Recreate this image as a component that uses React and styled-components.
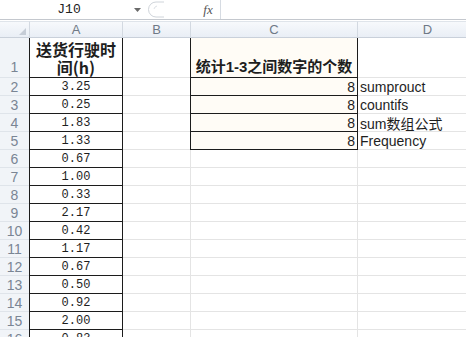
import React from 'react'
import styled, {createGlobalStyle} from 'styled-components'

const GlobalStyle = createGlobalStyle`
    html, body {
        margin: 0;
        padding: 0;
        background: #ffffff;
    }
    body {
        font-family: "Liberation Sans", "Noto Sans CJK SC", sans-serif;
    }
`

const Window = styled.div`
    width: 466px;
    height: 337px;
    overflow: hidden;
    background: #ffffff;
`

const FormulaBar = styled.div`
    display: flex;
    align-items: center;
    height: 19px;
    border-bottom: 1px solid #c4c8ce;
    margin-bottom: 1px;
    background: #ffffff;
`

const NameBox = styled.div`
    width: 122px;
    text-align: center;
    font-family: "Liberation Mono", "DejaVu Sans Mono", monospace;
    font-size: 13px;
    color: #222222;
    padding-left: 8px;
`

const DropArrow = styled.div`
    width: 14px;
    display: flex;
    justify-content: center;
    svg { display: block; }
`

const PillWrap = styled.div`
    width: 52px;
    height: 19px;
    display: flex;
    align-items: center;
    svg { display: block; }
`

const FxLabel = styled.div`
    width: 24px;
    font-family: "Liberation Serif", serif;
    font-style: italic;
    font-size: 13px;
    color: #555555;
    text-align: center;
    border-right: 1px solid #d6dbe2;
    height: 19px;
    line-height: 19px;
`

const FormulaInput = styled.div`
    flex: 1;
    height: 19px;
`

const Sheet = styled.div`
    display: grid;
    grid-template-columns: 30px 93px 68px 167px 140px;
    grid-template-rows: 17px 40px repeat(16, 18px);
`

const ColHead = styled.div`
    display: flex;
    align-items: center;
    justify-content: center;
    background: linear-gradient(#f7f9fc, #e9eef5);
    border-top: 1px solid #dfe4ea;
    border-right: 1px solid #d3d9e1;
    border-bottom: 1px solid #c9d0da;
    font-size: 13px;
    color: #6f7986;
    box-sizing: border-box;
`

const Corner = styled(ColHead)`
    justify-content: flex-end;
    align-items: flex-end;
    padding: 0 3px 2px 0;
    svg { display: block; }
`

const RowHead = styled.div`
    display: flex;
    align-items: center;
    justify-content: center;
    background: #f1f4f8;
    border-right: 1px solid #d3d9e1;
    border-bottom: 1px solid #dfe4ea;
    font-size: 14px;
    color: #7a8594;
    box-sizing: border-box;
    padding-top: ${props => props.$tall ? '18px' : '0'};
`

const Cell = styled.div`
    display: flex;
    align-items: ${props => props.$valign === 'bottom' ? 'flex-end' : props.$valign === 'top' ? 'flex-start' : 'center'};
    justify-content: ${props => props.$align === 'right' ? 'flex-end' : props.$align === 'left' ? 'flex-start' : 'center'};
    box-sizing: border-box;
    border-right: 1px solid ${props => props.$boxed ? '#1c1c1c' : '#e4e4e4'};
    border-bottom: 1px solid ${props => props.$boxed ? '#1c1c1c' : '#e4e4e4'};
    box-shadow: ${props => props.$boxed ? '-1px 0 0 #1c1c1c' : 'none'};
    background: ${props => props.$fill ? '#fffcf6' : '#ffffff'};
    padding: ${props => props.$align === 'right' ? '0 2px 0 0' : props.$align === 'left' ? '0 0 0 2px' : '0'};
    white-space: nowrap;
    overflow: hidden;
    color: #1e1e1e;
`

const NumText = styled.span`
    font-family: "Liberation Mono", "DejaVu Sans Mono", monospace;
    font-size: 12px;
`

const TitleText = styled.div`
    font-family: "Noto Sans CJK SC", sans-serif;
    font-weight: 700;
    font-size: 16px;
    line-height: 18px;
    text-align: center;
    margin-top: 2px;
`

const CountTitle = styled.span`
    font-family: "Liberation Sans", "Noto Sans CJK SC", sans-serif;
    font-weight: 700;
    font-size: 15px;
    line-height: 17px;
    padding-bottom: 2px;
`

const PlainText = styled.span`
    font-family: "Liberation Sans", "Noto Sans CJK SC", sans-serif;
    font-size: 14px;
`

const hours = ['3.25', '0.25', '1.83', '1.33', '0.67', '1.00', '0.33', '2.17', '0.42', '1.17', '0.67', '0.50', '0.92', '2.00', '0.83']
const methods = ['sumprouct', 'countifs', 'sum数组公式', 'Frequency']

const App = () => {
    return (
        <Window>
            <GlobalStyle />
            <FormulaBar>
                <NameBox>J10</NameBox>
                <DropArrow>
                    <svg width="7" height="4" viewBox="0 0 7 4"><path d="M0 0 L7 0 L3.5 4 Z" fill="#6a6a6a" /></svg>
                </DropArrow>
                <PillWrap>
                    <svg width="30" height="19" viewBox="0 0 30 19">
                        <path d="M20 2 L12 2 A7.5 7.5 0 0 0 12 17 L20 17" fill="none" stroke="#cfd4da" strokeWidth="1" />
                        <path d="M13 6 A4 4 0 0 0 10 9" fill="none" stroke="#dde1e6" strokeWidth="1" />
                    </svg>
                </PillWrap>
                <FxLabel>fx</FxLabel>
                <FormulaInput />
            </FormulaBar>
            <Sheet>
                <Corner>
                    <svg width="7" height="7" viewBox="0 0 7 7"><path d="M7 0 L7 7 L0 7 Z" fill="#c5ccd6" /></svg>
                </Corner>
                <ColHead>A</ColHead>
                <ColHead>B</ColHead>
                <ColHead>C</ColHead>
                <ColHead>D</ColHead>

                <RowHead $tall>1</RowHead>
                <Cell $boxed $valign="top">
                    <TitleText>送货行驶时<br />间(h)</TitleText>
                </Cell>
                <Cell />
                <Cell $boxed $fill $valign="bottom">
                    <CountTitle>统计1-3之间数字的个数</CountTitle>
                </Cell>
                <Cell />

                {hours.map((h, i) => (
                    <React.Fragment key={i}>
                        <RowHead>{i + 2}</RowHead>
                        <Cell $boxed><NumText>{h}</NumText></Cell>
                        <Cell />
                        {i < 4 ? (
                            <Cell $boxed $fill $align="right"><PlainText>8</PlainText></Cell>
                        ) : (
                            <Cell />
                        )}
                        {i < 4 ? (
                            <Cell $align="left"><PlainText>{methods[i]}</PlainText></Cell>
                        ) : (
                            <Cell />
                        )}
                    </React.Fragment>
                ))}
            </Sheet>
        </Window>
    )
}

export default App
